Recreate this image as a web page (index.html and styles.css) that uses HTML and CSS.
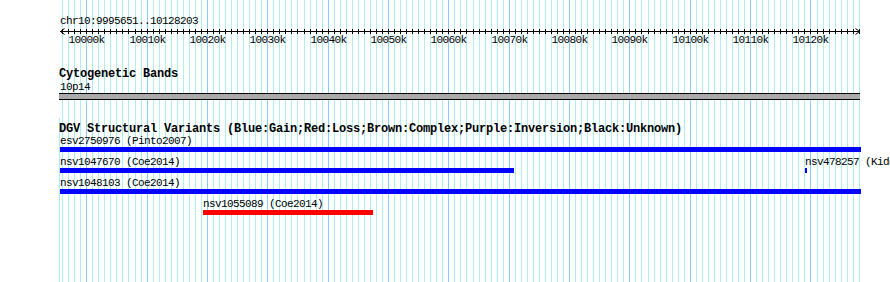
FILE: index.html
```html
<!DOCTYPE html>
<html>
<head>
<meta charset="utf-8">
<link rel="stylesheet" href="styles.css">
</head>
<body>
<div class="page">
  <svg class="grid" id="grid" width="890" height="282" xmlns="http://www.w3.org/2000/svg"></svg>
  <div class="content">
    <section class="ruler-track">
      <div class="label">chr10:9995651..10128203</div>
      <svg class="ruler" id="ruler" width="800" height="20" xmlns="http://www.w3.org/2000/svg">
        <line x1="0" y1="3.5" x2="800" y2="3.5" stroke="#000" stroke-width="1"/>
        <polyline points="4.5,0.5 0.5,3.5 4.5,6.5" fill="none" stroke="#000" stroke-width="1"/>
        <polyline points="795.5,0.5 799.5,3.5 795.5,6.5" fill="none" stroke="#000" stroke-width="1"/>
      </svg>
    </section>

    <section class="band-track">
      <div class="title">Cytogenetic Bands</div>
      <div class="label band-label">10p14</div>
      <div class="band"></div>
    </section>

    <section class="dgv-track">
      <div class="title dgv-title">DGV Structural Variants (Blue:Gain;Red:Loss;Brown:Complex;Purple:Inversion;Black:Unknown)</div>
      <div class="row">
        <div class="feature" style="margin-left:0;width:801px">
          <div class="label">esv2750976 (Pinto2007)</div>
          <div class="bar gain"></div>
        </div>
      </div>
      <div class="row">
        <div class="feature" style="margin-left:0;width:454px">
          <div class="label">nsv1047670 (Coe2014)</div>
          <div class="bar gain"></div>
        </div>
        <div class="feature" style="margin-left:291px;width:2px">
          <div class="label">nsv478257 (Kidd2008)</div>
          <div class="bar gain"></div>
        </div>
      </div>
      <div class="row">
        <div class="feature" style="margin-left:0;width:801px">
          <div class="label">nsv1048103 (Coe2014)</div>
          <div class="bar gain"></div>
        </div>
      </div>
      <div class="row">
        <div class="feature" style="margin-left:143px;width:170px">
          <div class="label">nsv1055089 (Coe2014)</div>
          <div class="bar loss"></div>
        </div>
      </div>
    </section>
  </div>
</div>
<script src="script.js"></script>
</body>
</html>
```

FILE: styles.css
```css
html, body {
  margin: 0;
  padding: 0;
  background: #ffffff;
}

.page {
  position: relative;
  width: 890px;
  height: 282px;
  overflow: hidden;
  font-family: "Liberation Mono", "DejaVu Sans Mono", monospace;
  color: #000;
}

.grid {
  position: absolute;
  left: 0;
  top: 0;
  z-index: 0;
}

.content {
  position: relative;
  z-index: 1;
  padding-left: 60px;
}

.label {
  font-size: 11px;
  letter-spacing: -0.6px;
  line-height: 12px;
  height: 12px;
  white-space: nowrap;
}

.title {
  font-size: 12px;
  font-weight: bold;
  letter-spacing: -0.2px;
  line-height: 13px;
  height: 13px;
  white-space: nowrap;
  margin-left: -1px;
}

.ruler-track {
  padding-top: 15px;
}

.ruler-track .label {
  line-height: 13px;
  height: 13px;
}

.ruler {
  display: block;
  overflow: visible;
}

.ruler text {
  font-family: "Liberation Mono", "DejaVu Sans Mono", monospace;
  font-size: 11px;
  letter-spacing: -0.6px;
}

.band-track {
  margin-top: 20px;
}

.band-label {
  margin-top: 0;
}

.band {
  margin-left: -1px;
  width: 801px;
  height: 5px;
  background: #aaaaaa;
  border-top: 1px solid #000;
  border-bottom: 1px solid #000;
}

.dgv-track {
  margin-top: 23px;
}

.dgv-title {
  line-height: 12px;
  height: 12px;
}

.row {
  display: flex;
  align-items: flex-start;
  margin-bottom: 4px;
}

.feature {
  flex-shrink: 0;
  display: flex;
  flex-direction: column;
}

.bar {
  height: 5px;
}

.gain {
  background: #0000ff;
}

.loss {
  background: #ff0000;
}
```

FILE: script.js
```js
(function () {
  var NS = "http://www.w3.org/2000/svg";
  var start = 9995651, end = 10128203, width = 800, left = 60;
  var scale = width / (end - start + 1);
  function px(pos) { return (pos - start) * scale; }

  var grid = document.getElementById("grid");
  var ruler = document.getElementById("ruler");

  var first = Math.ceil(start / 1000), last = Math.floor(end / 1000);
  for (var k = first; k <= last; k++) {
    var x = Math.round(px(k * 1000));
    if (x < 1 || x > 799) continue;
    var major = (k % 10 === 0);
    var r = document.createElementNS(NS, "rect");
    r.setAttribute("x", left + x);
    r.setAttribute("y", 0);
    r.setAttribute("width", 1);
    r.setAttribute("height", 282);
    r.setAttribute("fill", major ? "#87cefa" : "#afeeee");
    grid.appendChild(r);

    var t = document.createElementNS(NS, "rect");
    t.setAttribute("x", x);
    t.setAttribute("y", 1);
    t.setAttribute("width", 1);
    t.setAttribute("height", 5);
    t.setAttribute("fill", "#000");
    ruler.appendChild(t);

    if (major) {
      var txt = document.createElementNS(NS, "text");
      txt.setAttribute("x", x + 0.5);
      txt.setAttribute("y", 15);
      txt.setAttribute("text-anchor", "middle");
      txt.textContent = k + "k";
      ruler.appendChild(txt);
    }
  }

  var edge = document.createElementNS(NS, "rect");
  edge.setAttribute("x", 59);
  edge.setAttribute("y", 118);
  edge.setAttribute("width", 1);
  edge.setAttribute("height", 164);
  edge.setAttribute("fill", "#afeeee");
  grid.appendChild(edge);
})();
```
